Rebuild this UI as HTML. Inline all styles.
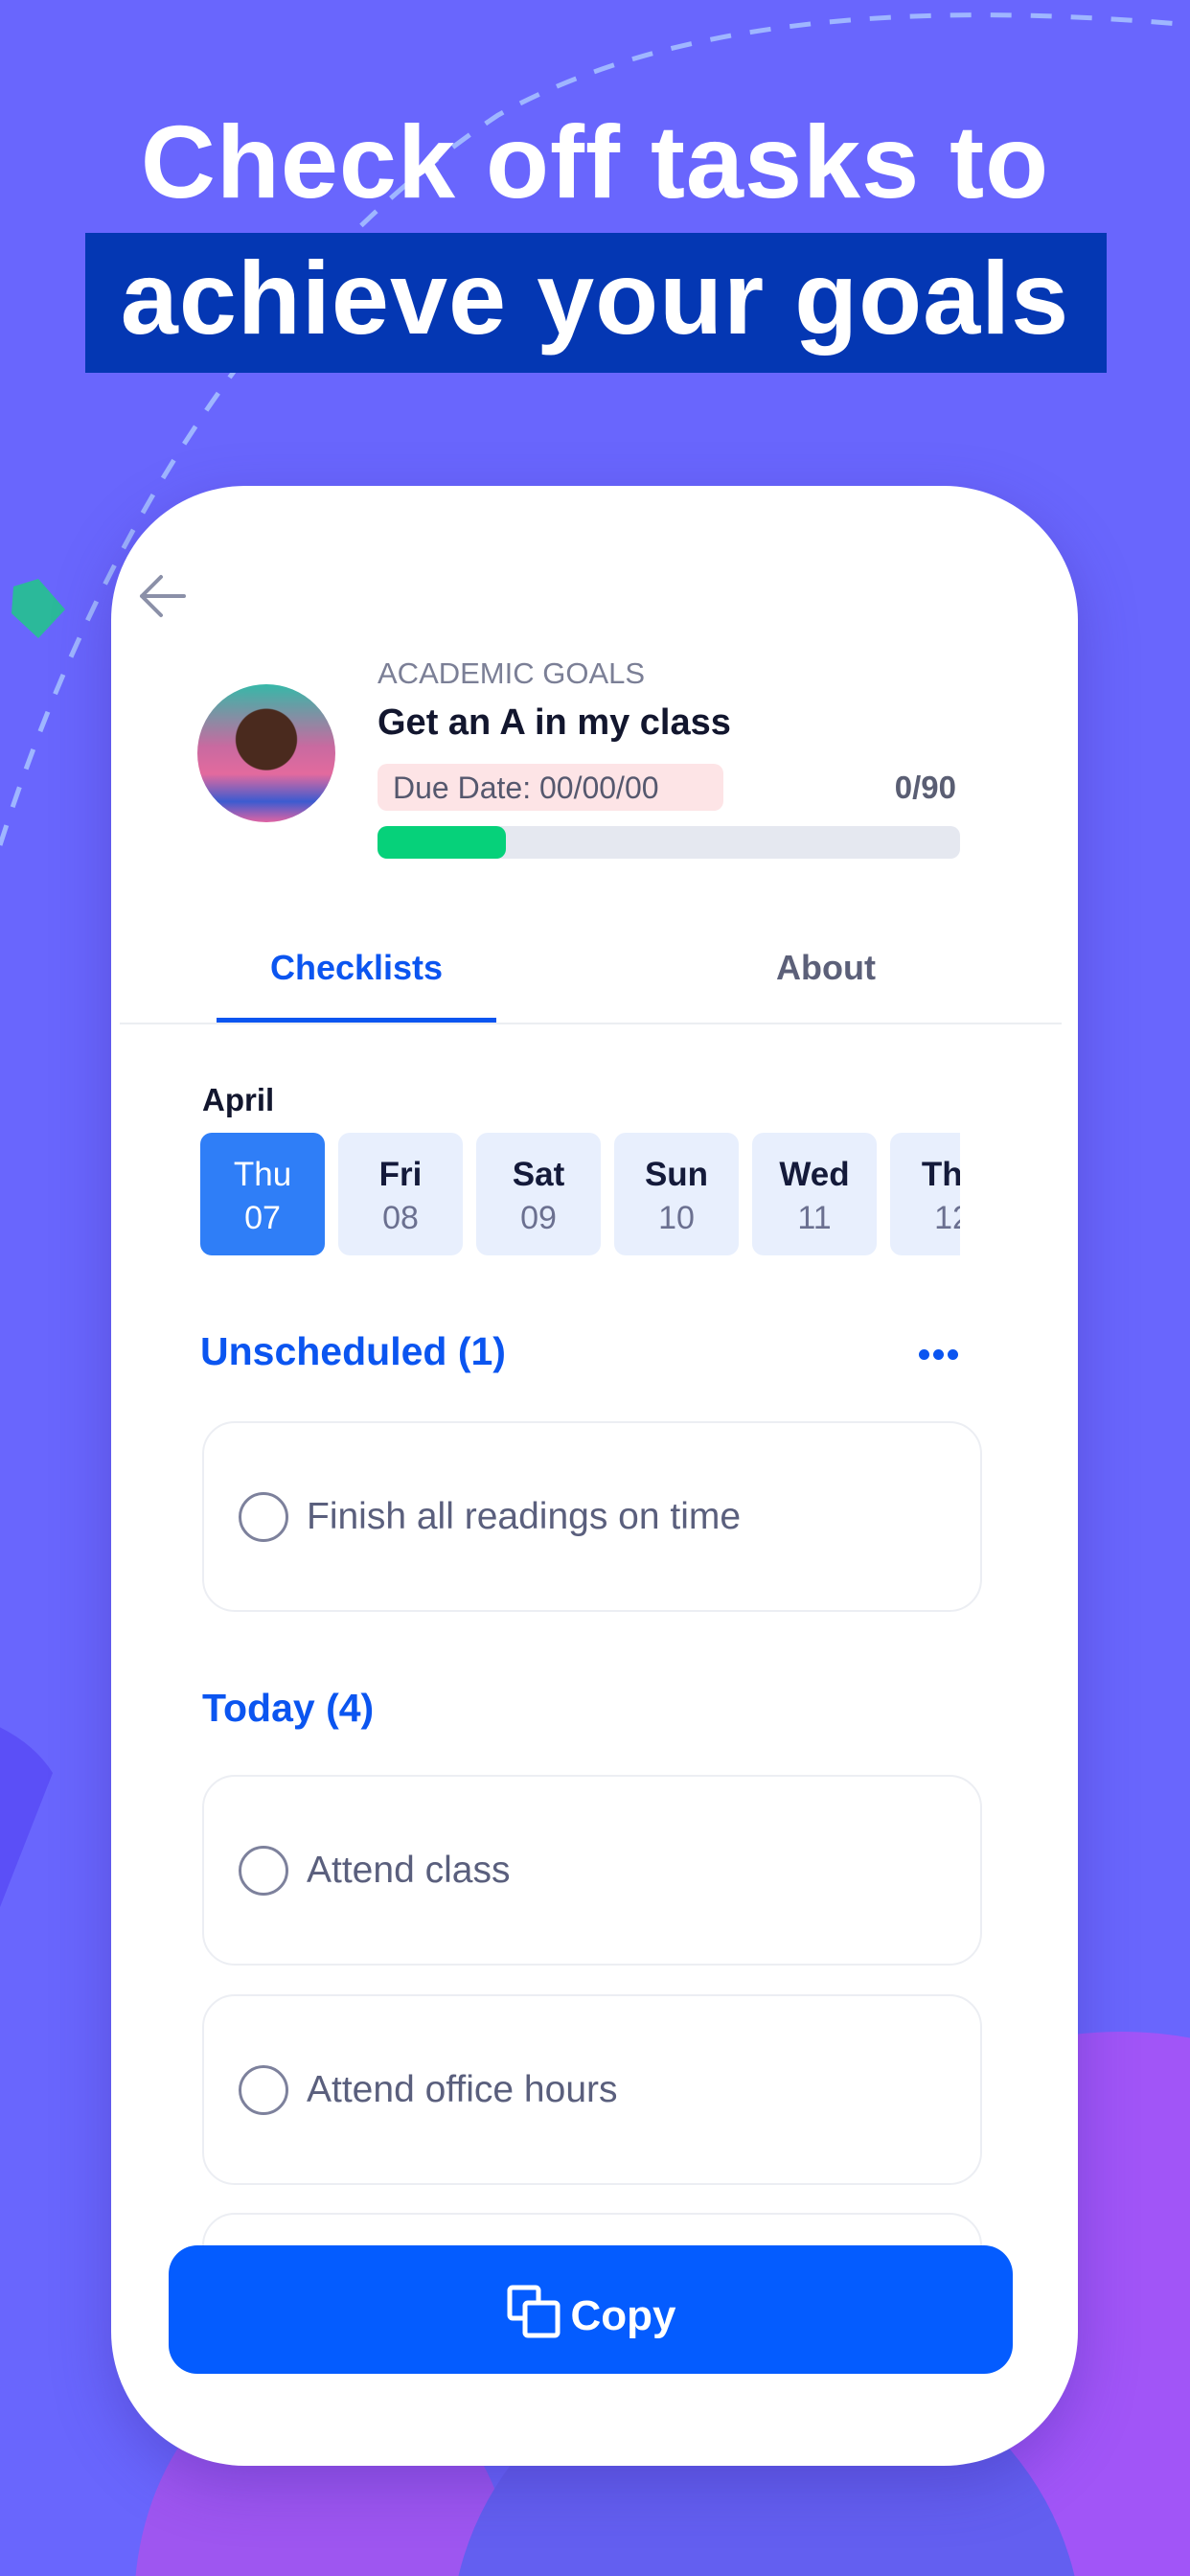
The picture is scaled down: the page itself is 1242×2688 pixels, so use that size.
<!DOCTYPE html>
<html><head><meta charset="utf-8"><style>
*{margin:0;padding:0;box-sizing:border-box}
html,body{width:1242px;height:2688px;overflow:hidden}
body{background:#6966fd;font-family:"Liberation Sans",sans-serif;position:relative}
.abs{position:absolute}
.h1{left:0;width:1242px;text-align:center;color:#fff;font-weight:bold;font-size:108px;letter-spacing:1px}
.card{left:116px;top:507px;width:1009px;height:2066px;background:#fff;border-radius:140px;overflow:hidden;box-shadow:0 20px 60px rgba(60,40,160,.35)}
.chip{top:675px;width:130px;height:128px;border-radius:12px;background:#e8effd;text-align:center}
.chip .d{margin-top:24px;font-size:35px;font-weight:bold;color:#141a3a}
.chip .n{margin-top:6px;font-size:34px;color:#6b7090}
.task{left:95px;width:814px;height:199px;border:2px solid #eceef3;border-radius:34px}
.task .c{position:absolute;left:36px;top:72px;width:52px;height:52px;border:3px solid #7d819c;border-radius:50%}
.task .t{position:absolute;left:107px;top:76px;font-size:39px;color:#5a5f7d}
.sec{font-size:41px;font-weight:bold;color:#0b55f0}
.dot{position:absolute;width:11px;height:11px;border-radius:50%;background:#0b55f0;top:901px}
</style></head><body>
<svg class="abs" style="left:0;top:0" width="1242" height="2688">
<circle cx="1170" cy="2520" r="400" fill="#a155f7"/>
<ellipse cx="340" cy="2720" rx="200" ry="260" fill="#9e56f0"/>
<ellipse cx="800" cy="2760" rx="330" ry="320" fill="#635ff0"/>
<path d="M-30 1790 Q30 1810 55 1850 L0 1990 L-30 1990Z" fill="#5b4ff7"/>
<path d="M0 882 C90 600 250 300 520 120 C700 20 950 0 1242 26" fill="none" stroke="#9fb6ff" stroke-width="5" stroke-dasharray="22 20"/>
<path d="M14 612 L40 604 L68 636 L40 666 L12 640Z" fill="#2bb99a"/>
</svg>
<div class="abs" style="left:89px;top:243px;width:1066px;height:146px;background:#0437b3"></div>
<div class="abs h1" style="top:106px">Check off tasks to</div>
<div class="abs h1" style="top:248px">achieve your goals</div>
<div class="abs card">
<svg class="abs" style="left:26px;top:90px" width="60" height="50"><path d="M50 25H6M26 5L6 25L26 45" fill="none" stroke="#8b90a8" stroke-width="4" stroke-linecap="round" stroke-linejoin="round"/></svg>
<div class="abs" style="left:90px;top:207px;width:144px;height:144px;border-radius:50%;background:radial-gradient(circle at 50% 40%,#4a2a1e 0 28%,transparent 29%),linear-gradient(180deg,#36b8a8 0%,#c86aa0 45%,#e36a9e 65%,#3c5bd0 85%,#e063a3 100%)"></div>
<div class="abs" style="left:278px;top:178px;font-size:31px;color:#7b7f96">ACADEMIC GOALS</div>
<div class="abs" style="left:278px;top:226px;font-size:38px;font-weight:bold;color:#12162e">Get an A in my class</div>
<div class="abs" style="left:278px;top:290px;width:361px;height:49px;border-radius:10px;background:#fde4e6;font-size:32px;color:#55586e;padding:7px 0 0 16px">Due Date: 00/00/00</div>
<div class="abs" style="left:800px;top:296px;font-size:33px;font-weight:bold;color:#5a5e73;width:82px;text-align:right">0/90</div>
<div class="abs" style="left:278px;top:355px;width:608px;height:34px;border-radius:10px;background:#e5e8f0"><div style="width:134px;height:34px;border-radius:10px;background:#06d17a"></div></div>
<div class="abs" style="left:110px;top:482px;width:292px;text-align:center;font-size:36px;font-weight:bold;color:#0b55f0">Checklists</div>
<div class="abs" style="left:640px;top:482px;width:212px;text-align:center;font-size:36px;font-weight:bold;color:#5c6079">About</div>
<div class="abs" style="left:110px;top:555px;width:292px;height:5px;background:#0b55f0"></div>
<div class="abs" style="left:9px;top:560px;width:983px;height:2px;background:#eceef2"></div>
<div class="abs" style="left:95px;top:622px;font-size:33px;font-weight:bold;color:#12162e">April</div>
<div style="position:absolute;left:93px;top:0;width:793px;height:900px;overflow:hidden">
<div class="chip abs" style="left:0;background:#2f7ef7"><div class="d" style="color:#fff;font-weight:normal">Thu</div><div class="n" style="color:#fff">07</div></div>
<div class="chip abs" style="left:144px"><div class="d">Fri</div><div class="n">08</div></div>
<div class="chip abs" style="left:288px"><div class="d">Sat</div><div class="n">09</div></div>
<div class="chip abs" style="left:432px"><div class="d">Sun</div><div class="n">10</div></div>
<div class="chip abs" style="left:576px"><div class="d">Wed</div><div class="n">11</div></div>
<div class="chip abs" style="left:720px"><div class="d">Thu</div><div class="n">12</div></div>
</div>
<div class="abs sec" style="left:93px;top:880px">Unscheduled (1)</div>
<div class="dot" style="left:843px"></div><div class="dot" style="left:858px"></div><div class="dot" style="left:873px"></div>
<div class="abs task" style="top:976px"><div class="c"></div><div class="t">Finish all readings on time</div></div>
<div class="abs sec" style="left:95px;top:1252px">Today (4)</div>
<div class="abs task" style="top:1345px"><div class="c"></div><div class="t">Attend class</div></div>
<div class="abs task" style="top:1574px"><div class="c"></div><div class="t">Attend office hours</div></div>
<div class="abs" style="left:0;top:1800px;width:1009px;height:36px;overflow:hidden"><div class="abs task" style="top:2px"></div></div>
<div class="abs" style="left:60px;top:1836px;width:881px;height:134px;border-radius:30px;background:#045cff;color:#fff;font-size:44px;font-weight:bold;text-align:center;padding-top:40px">
<svg style="vertical-align:-10px;margin-right:8px" width="60" height="58" viewBox="0 0 60 58"><rect x="4" y="4" width="30" height="32" rx="3" fill="none" stroke="#fff" stroke-width="5"/><rect x="20" y="20" width="34" height="34" rx="3" fill="#045cff" stroke="#fff" stroke-width="5"/></svg>Copy</div>
</div>
</body></html>
